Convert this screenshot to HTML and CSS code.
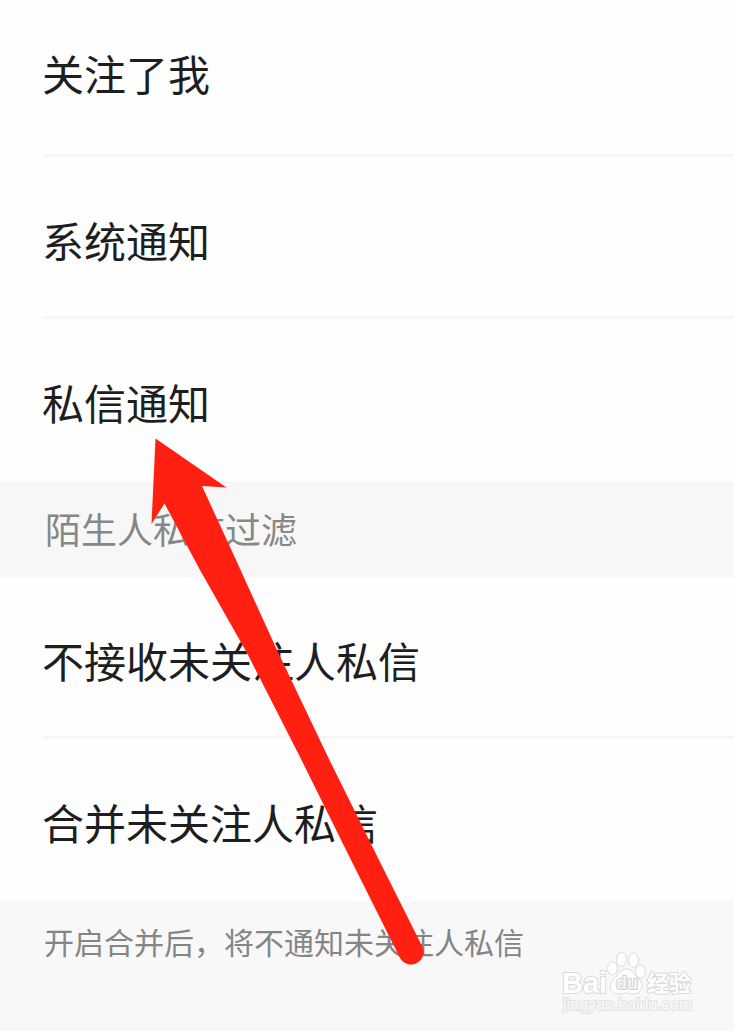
FILE: index.html
```html
<!DOCTYPE html>
<html lang="zh-CN">
<head>
<meta charset="utf-8">
<meta name="viewport" content="width=device-width, initial-scale=1">
<title>通知设置</title>
<link rel="stylesheet" href="styles.css">
</head>
<body>
<main class="settings">
  <ul class="group group-top">
    <li class="row">关注了我</li>
    <li class="row">系统通知</li>
    <li class="row">私信通知</li>
  </ul>
  <h2 class="section-title">陌生人私信过滤</h2>
  <ul class="group">
    <li class="row">不接收未关注人私信</li>
    <li class="row">合并未关注人私信</li>
  </ul>
  <footer class="note">
    <p class="note-text">开启合并后，将不通知未关注人私信</p>
  </footer>
  <svg class="arrow" width="734" height="1031" viewBox="0 0 734 1031" aria-hidden="true">
    <path fill="#ff2011" d="M155.500 438.500L226.500 487.500L202 486L236 560L277 650L328 757L379 860L422 946A12.500 12.500 0 0 1 400 958L352 862L300 757L247 653L200 570L164.500 503.500L151.500 524Z"/>
  </svg>
  <svg class="watermark" width="150" height="74" viewBox="0 0 150 74" role="img" aria-label="Baidu 经验">
    <g class="mark">
      <text class="brand" x="4" y="45">Bai</text>
      <ellipse cx="54.500" cy="20.500" rx="5" ry="6.500"/>
      <ellipse cx="63.500" cy="11.500" rx="5" ry="7"/>
      <ellipse cx="75.500" cy="12" rx="5" ry="7"/>
      <ellipse cx="82.500" cy="23.500" rx="5" ry="6.500"/>
      <path d="M68.500 21C74 21 76 27 81 31C87 36 84 46 76 46C72 46 71 45 68.500 45C65 45 64 46 60 46C51 46 50 36 56 31C61 27 62 21 68.500 21Z"/>
      <text class="du" x="58" y="41">du</text>
      <text class="cn" x="89" y="43">经验</text>
    </g>
    <text class="site" x="5" y="62">jingyan.baidu.com</text>
  </svg>
</main>
</body>
</html>
```
FILE: styles.css
```css
* {
  box-sizing: border-box;
}

body {
  margin: 0;
  background: #f8f8f8;
  font-family: "Noto Sans CJK SC", sans-serif;
}

.settings {
  position: relative;
  min-height: 100vh;
  overflow: hidden;
}

.group {
  margin: 0;
  padding: 0 0 0 42px;
  list-style: none;
  background: #fefefe;
}

.row {
  height: 162px;
  padding-top: 52px;
  color: #1e1e1e;
  font-size: 42px;
  line-height: 62px;
  white-space: nowrap;
}

.row:first-child {
  height: 159px;
}

.row + .row {
  border-top: 3px solid #f6f6f6;
}

.row:last-child {
  height: 165px;
}

.group-top .row:first-child {
  height: 154px;
  padding-top: 42px;
}

.section-title {
  margin: 0;
  padding: 21px 45px 23px;
  background: #f7f7f7;
  color: #878787;
  font-size: 36px;
  font-weight: 400;
  line-height: 52px;
}

.note {
  padding: 18px 44px;
}

.note-text {
  margin: 0;
  color: #858585;
  font-size: 30px;
  line-height: 44px;
}

.arrow {
  position: absolute;
  top: 0;
  left: 0;
}

.watermark {
  position: absolute;
  top: 948px;
  right: 26px;
  font-family: "Liberation Sans", "Noto Sans CJK SC", sans-serif;
}

.mark {
  fill: #ffffff;
  stroke: #dadada;
  stroke-width: 1;
}

.mark text {
  stroke-width: 2;
  paint-order: stroke;
}

.brand {
  font-size: 29px;
  font-weight: 700;
}

.mark .du {
  fill: #f4f4f4;
  stroke: #d2d2d2;
  font-size: 18px;
  font-weight: 700;
}

.cn {
  font-size: 22px;
  font-weight: 700;
}

.site {
  fill: #fcfcfc;
  stroke: #e2e2e2;
  stroke-width: 2;
  paint-order: stroke;
  font-size: 16px;
}
```
